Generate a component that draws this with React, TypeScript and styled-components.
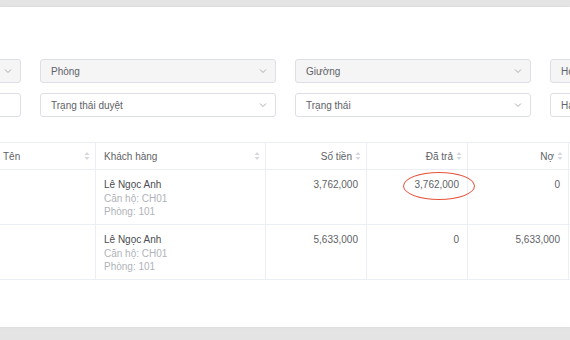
import React from "react";
import styled, { createGlobalStyle } from "styled-components";

const GlobalStyle = createGlobalStyle`
  html, body {
    margin: 0;
    padding: 0;
    background: #e4e4e4;
    font-family: "Liberation Sans", Arial, Helvetica, sans-serif;
    overflow: hidden;
  }
`;

const Page = styled.div`
  width: 570px;
  height: 340px;
  padding-top: 7px;
  box-sizing: border-box;
`;

const Panel = styled.div`
  background: #fff;
  height: 320px;
  padding-top: 52px;
  box-sizing: border-box;
  overflow: hidden;
  box-shadow: 0 0 2px rgba(0, 0, 0, 0.08);
`;

const FilterView = styled.div`
  margin-left: -215px;
  display: grid;
  grid-template-columns: repeat(4, 236px);
  column-gap: 19px;
  row-gap: 10px;
`;

const Select = styled.div<{ $disabled?: boolean }>`
  height: 24px;
  box-sizing: border-box;
  border: 1px solid #dcdfe6;
  border-radius: 3px;
  background: ${(p) => (p.$disabled ? "#f5f5f6" : "#fff")};
  display: flex;
  align-items: center;
  justify-content: space-between;
  padding: 0 8px 0 10px;
  font-size: 10px;
  color: #606266;
  white-space: nowrap;
  overflow: hidden;
`;

const Chevron = () => (
  <svg width="8" height="6" viewBox="0 0 8 6">
    <path d="M1 1.5 L4 4.5 L7 1.5" fill="none" stroke="#a8abb2" strokeWidth="1" />
  </svg>
);

const TableView = styled.div`
  margin-top: 25px;
  margin-left: -6px;
`;

const Table = styled.table`
  width: 694px;
  border-collapse: collapse;
  table-layout: fixed;
  font-size: 10px;
  color: #606266;
`;

const Th = styled.th<{ $right?: boolean }>`
  height: 27px;
  box-sizing: border-box;
  padding: 0 5px 0 8px;
  border: 1px solid #ebeef5;
  font-weight: normal;
  color: #606266;
  text-align: ${(p) => (p.$right ? "right" : "left")};
`;

const HeadInner = styled.div<{ $right?: boolean }>`
  display: flex;
  align-items: center;
  justify-content: ${(p) => (p.$right ? "flex-end" : "space-between")};
  gap: 3px;
`;

const Td = styled.td<{ $right?: boolean }>`
  height: 55px;
  box-sizing: border-box;
  vertical-align: top;
  padding: 8px 8px 0 8px;
  border: 1px solid #ebeef5;
  text-align: ${(p) => (p.$right ? "right" : "left")};
  position: relative;
  line-height: 13.5px;
`;

const Name = styled.div`
  color: #4a4c52;
`;

const Sub = styled.div`
  color: #b0b3b9;
`;

const Circle = styled.div`
  position: absolute;
  left: 36px;
  top: 2px;
  width: 72px;
  height: 28px;
  border: 1.5px solid #e5533d;
  border-radius: 50%;
  box-sizing: border-box;
`;

const Sort = () => (
  <svg width="6" height="10" viewBox="0 0 6 10">
    <path d="M3 1 L5.5 4 L0.5 4 Z" fill="#d4d7dd" />
    <path d="M3 9 L5.5 6 L0.5 6 Z" fill="#d4d7dd" />
  </svg>
);

const columns = [
  { label: "Tên", width: 101, right: false },
  { label: "Khách hàng", width: 170, right: false },
  { label: "Số tiền", width: 101, right: true },
  { label: "Đã trả", width: 101, right: true },
  { label: "Nợ", width: 101, right: true },
  { label: "", width: 120, right: false },
];

const rows = [
  { name: "Lê Ngọc Anh", amount: "3,762,000", paid: "3,762,000", debt: "0", mark: true },
  { name: "Lê Ngọc Anh", amount: "5,633,000", paid: "0", debt: "5,633,000", mark: false },
];

export default function App() {
  return (
    <>
      <GlobalStyle />
      <Page>
        <Panel>
          <FilterView>
            <Select $disabled><span /><Chevron /></Select>
            <Select $disabled>Phòng<Chevron /></Select>
            <Select $disabled>Giường<Chevron /></Select>
            <Select $disabled>Họ tên<Chevron /></Select>
            <Select />
            <Select>Trạng thái duyệt<Chevron /></Select>
            <Select>Trạng thái<Chevron /></Select>
            <Select>Hạn thanh toán<Chevron /></Select>
          </FilterView>
          <TableView>
            <Table>
              <colgroup>
                {columns.map((c, i) => (
                  <col key={i} style={{ width: c.width }} />
                ))}
              </colgroup>
              <thead>
                <tr>
                  {columns.map((c, i) => (
                    <Th key={i} $right={c.right}>
                      {c.label && (
                        <HeadInner $right={c.right}>
                          <span>{c.label}</span>
                          <Sort />
                        </HeadInner>
                      )}
                    </Th>
                  ))}
                </tr>
              </thead>
              <tbody>
                {rows.map((r, i) => (
                  <tr key={i}>
                    <Td />
                    <Td>
                      <Name>{r.name}</Name>
                      <Sub>Căn hộ: CH01</Sub>
                      <Sub>Phòng: 101</Sub>
                    </Td>
                    <Td $right>{r.amount}</Td>
                    <Td $right>
                      {r.paid}
                      {r.mark && <Circle />}
                    </Td>
                    <Td $right>{r.debt}</Td>
                    <Td />
                  </tr>
                ))}
              </tbody>
            </Table>
          </TableView>
        </Panel>
      </Page>
    </>
  );
}
